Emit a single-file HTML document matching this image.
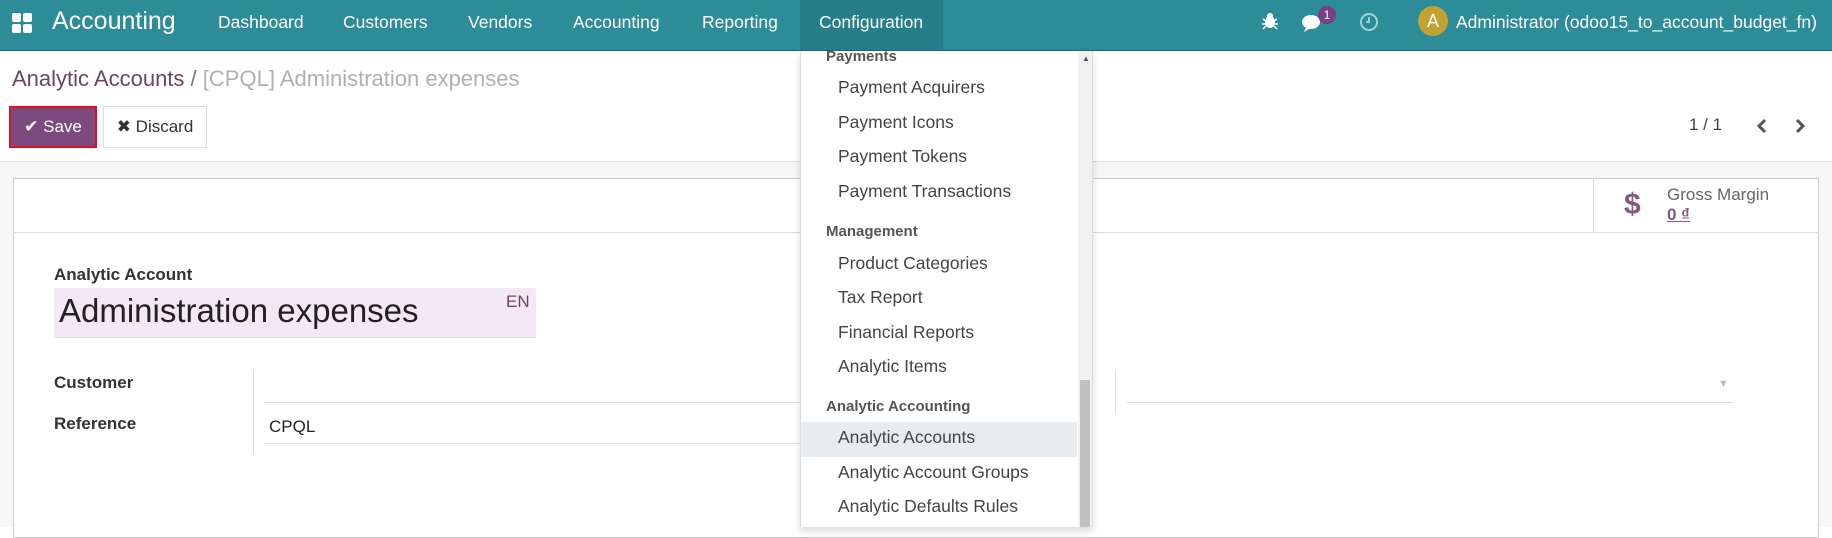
<!DOCTYPE html>
<html><head><meta charset="utf-8"><style>
*{box-sizing:border-box;margin:0;padding:0}
body{width:1832px;height:527px;overflow:hidden;background:#fff;font-family:"Liberation Sans",sans-serif;position:relative;color:#4c4c4c}
.abs{position:absolute;white-space:nowrap}
.nav{position:absolute;left:0;top:0;width:1832px;height:51px;background:#2c8c98;border-bottom:1px solid #1f6a73}
.nav .it{position:absolute;top:0;height:50px;line-height:44px;color:#fff;font-size:17.5px}
.menu{position:absolute;left:800px;top:51px;width:293px;height:476px;background:#fff;border-left:1px solid #ddd;border-right:1px solid #ddd;box-shadow:0 4px 8px rgba(0,0,0,.15)}
.menu .h{position:absolute;left:25px;font-size:15px;font-weight:bold;color:#555}
.menu .m{position:absolute;left:37px;font-size:17.5px;color:#444}
.lbl{font-weight:bold;font-size:17px;color:#333}
</style></head><body>
<div class="nav">
 <svg class="abs" style="left:12px;top:13px" width="20" height="20"><rect x="0" y="0" width="9" height="9" rx="2" fill="#fff"/><rect x="11" y="0" width="9" height="9" rx="2" fill="#fff"/><rect x="0" y="11" width="9" height="9" rx="2" fill="#fff"/><rect x="11" y="11" width="9" height="9" rx="2" fill="#fff"/></svg>
 <div class="it" style="left:52px;font-size:25px;line-height:42px">Accounting</div>
 <div class="it" style="left:218px">Dashboard</div>
 <div class="it" style="left:343px">Customers</div>
 <div class="it" style="left:468px">Vendors</div>
 <div class="it" style="left:573px">Accounting</div>
 <div class="it" style="left:702px">Reporting</div>
 <div class="it" style="left:800px;width:143px;background:#267e89;padding-left:19px">Configuration</div>
 <svg class="abs" style="left:1262px;top:12px" width="16" height="18"><ellipse cx="8" cy="10" rx="5" ry="6" fill="#fff"/><circle cx="8" cy="4" r="3" fill="#fff"/><path d="M1 7 L4 9 M15 7 L12 9 M0 12 H4 M16 12 H12 M1 17 L4 14 M15 17 L12 14" stroke="#fff" stroke-width="1.5"/></svg>
 <svg class="abs" style="left:1301px;top:13px" width="24" height="20"><ellipse cx="10" cy="9" rx="9" ry="7" fill="#fff"/><path d="M5 14 L3 19 L10 15Z" fill="#fff"/></svg>
 <div class="abs" style="left:1318px;top:6px;width:18px;height:18px;border-radius:9px;background:#7a3c82;color:#fff;font-size:12px;text-align:center;line-height:18px">1</div>
 <svg class="abs" style="left:1359px;top:12px" width="20" height="20"><circle cx="10" cy="10" r="8" stroke="#9fd3d8" stroke-width="2" fill="none"/><path d="M10 5 V10 H7" stroke="#9fd3d8" stroke-width="2" fill="none"/></svg>
 <div class="abs" style="left:1418px;top:6px;width:30px;height:30px;border-radius:15px;background:#c1a232;color:#fff;font-size:18px;text-align:center;line-height:30px">A</div>
 <div class="it" style="left:1456px">Administrator (odoo15_to_account_budget_fn)</div>
</div>
<div class="abs" style="left:12px;top:66px;font-size:22px;color:#6b4566">Analytic Accounts <span style="color:#777">/</span> <span style="color:#b0b0b0">[CPQL] Administration expenses</span></div>
<div class="abs" style="left:9px;top:106px;width:88px;height:42px;background:#7c4a7e;border:2px solid #e0101c;color:#fff;font-size:17px;line-height:38px;text-align:center">✔ Save</div>
<div class="abs" style="left:103px;top:106px;width:104px;height:42px;border:1px solid #ddd;color:#333;font-size:17px;line-height:40px;text-align:center">✖ Discard</div>
<div class="abs" style="left:1689px;top:115px;font-size:17px;color:#444">1 / 1</div>
<svg class="abs" style="left:1756px;top:118px" width="12" height="16"><path d="M9 2 L3 8 L9 14" stroke="#555" stroke-width="3" fill="none"/></svg>
<svg class="abs" style="left:1794px;top:118px" width="12" height="16"><path d="M3 2 L9 8 L3 14" stroke="#555" stroke-width="3" fill="none"/></svg>
<div class="abs" style="left:0;top:161px;width:1832px;height:366px;background:#f7f7f7;border-top:1px solid #ddd"></div>
<div class="abs" style="left:13px;top:178px;width:1806px;height:360px;background:#fff;border:1px solid #ccc"></div>
<div class="abs" style="left:13px;top:232px;width:1806px;height:1px;background:#ddd"></div>
<div class="abs" style="left:1593px;top:178px;width:1px;height:54px;background:#ddd"></div>
<div class="abs" style="left:1624px;top:188px;font-size:30px;font-weight:bold;color:#875a7b">$</div>
<div class="abs" style="left:1667px;top:185px;font-size:17px;color:#666">Gross Margin</div>
<div class="abs" style="left:1667px;top:205px;font-size:17px;font-weight:bold;color:#875a7b;text-decoration:underline">0 ₫</div>
<div class="abs lbl" style="left:54px;top:265px">Analytic Account</div>
<div class="abs" style="left:54px;top:288px;width:482px;height:50px;background:#f3e9f3;border-bottom:1px solid #ddd"></div>
<div class="abs" style="left:59px;top:292px;font-size:33px;color:#222">Administration expenses</div>
<div class="abs" style="left:506px;top:292px;font-size:17px;color:#6b4566">EN</div>
<div class="abs lbl" style="left:54px;top:373px">Customer</div>
<div class="abs lbl" style="left:54px;top:414px">Reference</div>
<div class="abs" style="left:253px;top:371px;width:1px;height:82px;background:#ddd"></div>
<div class="abs" style="left:264px;top:402px;width:540px;height:1px;background:#ddd"></div>
<div class="abs" style="left:264px;top:443px;width:540px;height:1px;background:#ddd"></div>
<div class="abs" style="left:269px;top:417px;font-size:17px;color:#222">CPQL</div>
<div class="abs" style="left:1115px;top:371px;width:1px;height:42px;background:#ddd"></div>
<div class="abs" style="left:1127px;top:402px;width:606px;height:1px;background:#ddd"></div>
<div class="abs" style="left:1718px;top:378px;font-size:11px;color:#bbb">▼</div>
<div class="menu">
 <div class="h" style="top:-3px">Payments</div>
 <div class="m" style="top:26px">Payment Acquirers</div>
 <div class="m" style="top:61px">Payment Icons</div>
 <div class="m" style="top:95px">Payment Tokens</div>
 <div class="m" style="top:130px">Payment Transactions</div>
 <div class="h" style="top:172px">Management</div>
 <div class="m" style="top:202px">Product Categories</div>
 <div class="m" style="top:236px">Tax Report</div>
 <div class="m" style="top:271px">Financial Reports</div>
 <div class="m" style="top:305px">Analytic Items</div>
 <div class="h" style="top:347px">Analytic Accounting</div>
 <div class="abs" style="left:0;top:371px;width:276px;height:35px;background:#e9ecef"></div>
 <div class="m" style="top:376px">Analytic Accounts</div>
 <div class="m" style="top:411px">Analytic Account Groups</div>
 <div class="m" style="top:445px">Analytic Defaults Rules</div>
 <div class="abs" style="left:277px;top:0;width:14px;height:476px;background:#f1f1f1"></div>
 <div class="abs" style="left:279px;top:329px;width:10px;height:147px;background:#c1c1c1"></div>
 <div class="abs" style="left:281px;top:3px;font-size:8px;color:#555">▲</div>
</div>
</body></html>
